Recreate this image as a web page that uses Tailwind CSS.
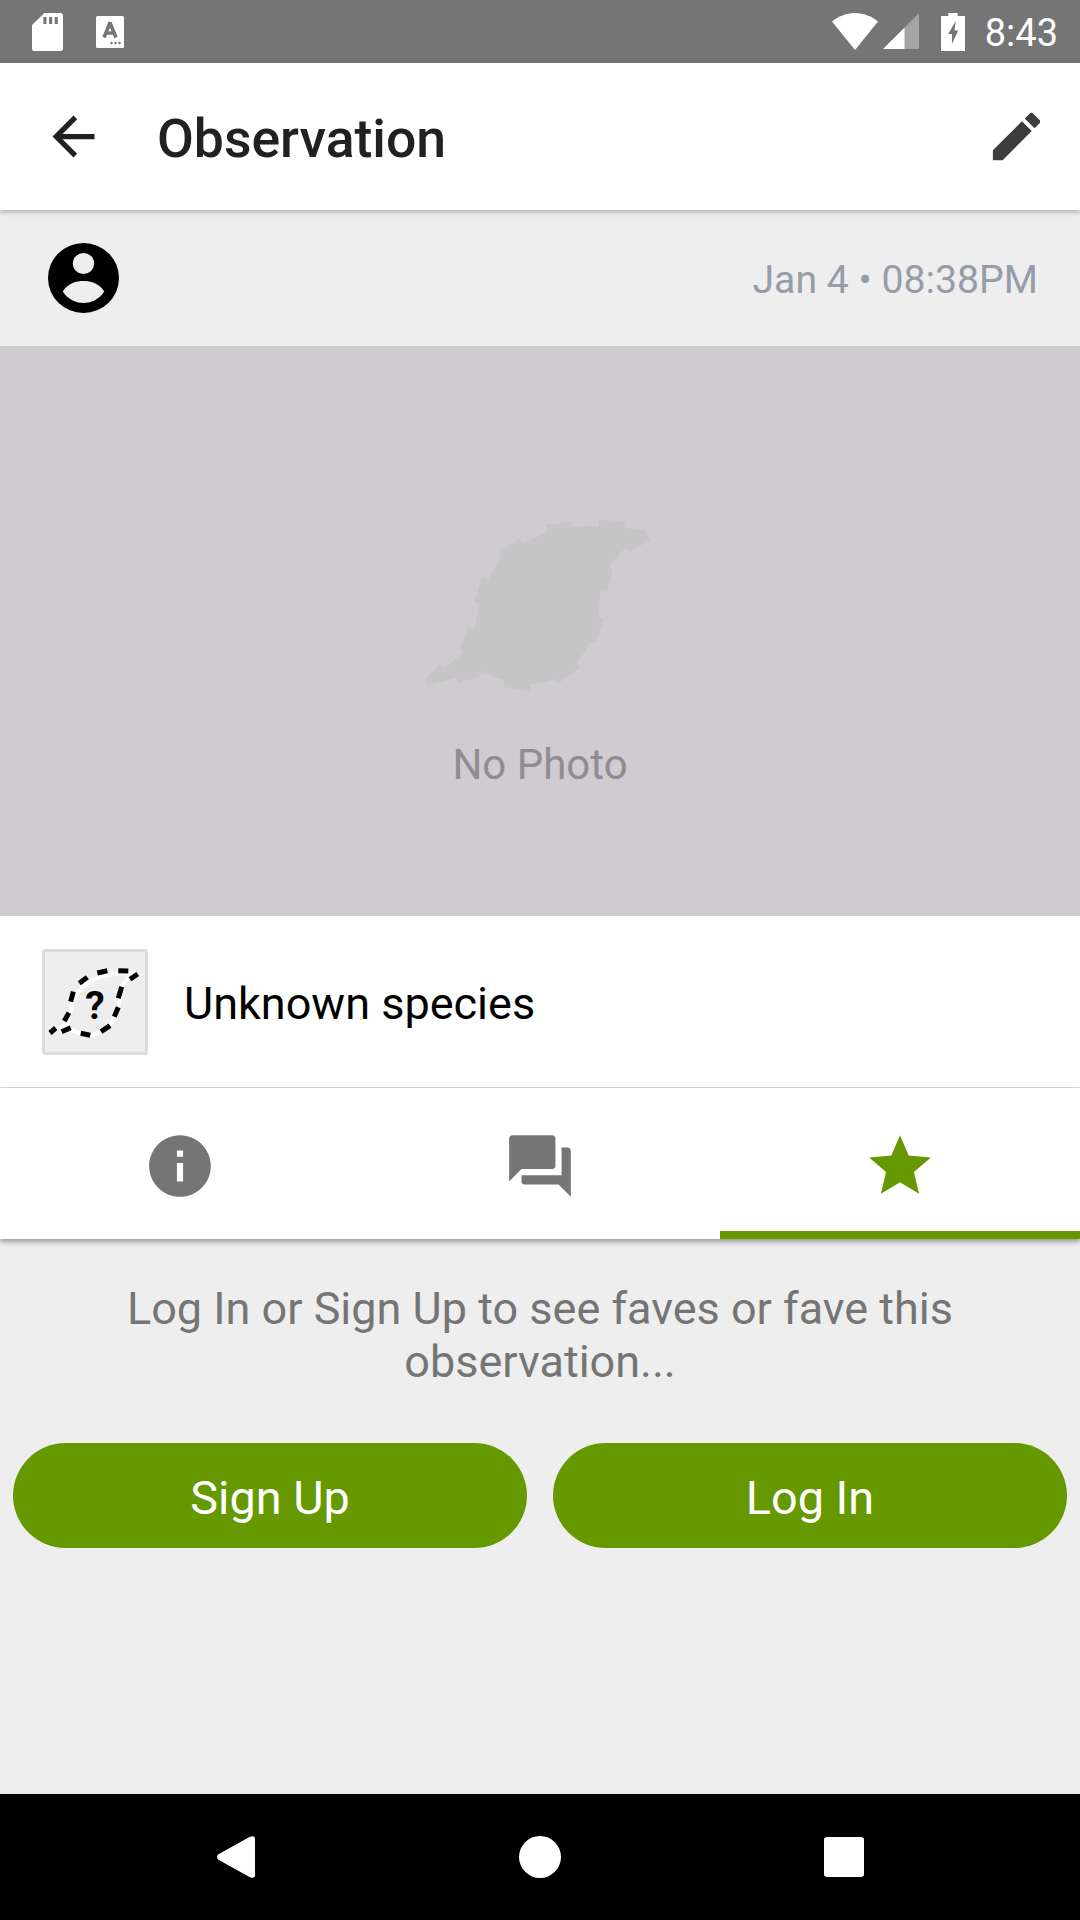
<!DOCTYPE html>
<html>
<head>
<meta charset="utf-8">
<script src="https://cdn.jsdelivr.net/npm/@tailwindcss/browser@4"></script>
</head>
<body class="m-0">
<div class="w-[1080px] h-[1920px] flex flex-col overflow-hidden bg-[#eeeeee] font-['Roboto',sans-serif]">

  <!-- status bar -->
  <div class="h-[63px] shrink-0 bg-[#757575] flex items-center text-white">
    <svg class="ml-[32px] w-[31px] h-[38px]" viewBox="0 0 30 38" preserveAspectRatio="none"><path fill="#fff" fill-rule="evenodd" d="M12 0H27.500Q30 0 30 2.500V35.500Q30 38 27.500 38H2.500Q0 38 0 35.500V12ZM11 4V11H14V4ZM16.500 4V11H19.500V4ZM22 4V11H25V4Z"/></svg>
    <svg class="ml-[33px] w-[28px] h-[32px]" viewBox="0 0 28 32"><path fill="#fff" d="M1.500 0H26.500Q28 0 28 1.500V30.500Q28 32 26.500 32H1.500Q0 32 0 30.500V1.500Q0 0 1.500 0Z"/><path fill="none" stroke="#757575" stroke-width="3.600" d="M8 21.500L13.700 7.500H14.300L20 21.500M10 17H18"/><circle cx="15.500" cy="27" r="1.200" fill="#757575"/><circle cx="19.500" cy="27" r="1.200" fill="#757575"/><circle cx="23.500" cy="27" r="1.200" fill="#757575"/></svg>
    <svg class="ml-auto w-[46px] h-[37px]" viewBox="0 0 45 37" preserveAspectRatio="none"><path fill="#fff" d="M0 8.500C6 3.500 14 0 22.500 0S39 3.500 45 8.500L22.500 37Z"/></svg>
    <svg class="ml-[5px] w-[36px] h-[37px]" viewBox="0 0 35 37" preserveAspectRatio="none"><path fill="#fff" fill-opacity=".35" d="M21 14.500L35 0V36H21Z"/><path fill="#fff" d="M0 36L21 14.500V36Z"/></svg>
    <svg class="ml-[22px] w-[24px] h-[38px]" viewBox="0 0 23 38" preserveAspectRatio="none"><path fill="#fff" d="M7 0H16V3H23V38H0V3H7Z"/><path fill="#757575" d="M14 8L7 21H10.500V31L16.500 17.500H13Z"/></svg>
    <span class="ml-[20px] mr-[22px] mt-[3px] text-[38px] leading-none">8:43</span>
  </div>

  <!-- toolbar -->
  <div class="relative z-20 h-[147px] shrink-0 bg-white flex items-center shadow-[0_2px_5px_rgba(0,0,0,0.28)]">
    <svg class="ml-[42px] w-[63px] h-[63px]" viewBox="0 0 24 24"><path fill="#212121" d="M20 11H7.830l5.590-5.590L12 4l-8 8 8 8 1.410-1.410L7.830 13H20v-2z"/></svg>
    <span class="ml-[52px] mt-[5px] text-[53.500px] font-medium text-[#212121] leading-none">Observation</span>
    <svg class="ml-auto mr-[32px] w-[63px] h-[63px]" viewBox="0 0 24 24"><path fill="#3d3d3d" d="M3 17.250V21h3.750L17.810 9.940l-3.750-3.750L3 17.250zM20.710 7.040c.39-.39.39-1.020 0-1.410l-2.340-2.340c-.39-.39-1.020-.39-1.410 0l-1.830 1.830 3.750 3.750 1.830-1.830z"/></svg>
  </div>

  <!-- user row -->
  <div class="h-[136px] shrink-0 bg-[#eeeeee] flex items-center justify-between pl-[48px] pr-[42px]">
    <svg class="w-[71px] h-[70px]" viewBox="0 0 70 70" preserveAspectRatio="none"><circle cx="35" cy="35" r="35" fill="#000"/><circle cx="35" cy="20.500" r="10.500" fill="#eeeeee"/><path fill="#eeeeee" d="M14.500 48.500C20 40 28 38 35 38S50 40 55.500 48.500C50 57 42 60 35 60S20 57 14.500 48.500Z"/></svg>
    <span class="mt-[6px] text-[39.200px] text-[#969ca8] leading-none">Jan 4 • 08:38PM</span>
  </div>

  <!-- photo -->
  <div class="h-[570px] shrink-0 bg-[#cfcbd1] flex flex-col items-center pt-[154px]">
    <svg class="w-[280px] h-[200px]" viewBox="0 0 840 600"><path fill="#c5c5c5" d="M75 535L120 495L132 505L190 458L180 448L205 383L222 390L240 312L224 305L245 232L265 238L305 172L297 158L360 115L370 128L442 97L437 75L515 64L518 82L597 78L597 60L673 64L675 84L735 90L750 122L685 155L678 143Q650 165 627 200L638 207L620 275L602 272L595 350L612 355L585 430L570 425Q555 460 528 487L540 503L475 550L462 537Q430 550 390 553L388 573L310 560L312 540Q275 530 243 512L240 527L175 550L168 533L92 553L85 562L73 540Z"/></svg>
    <span class="mt-[44px] text-[42px] text-[#8f8c92] leading-none">No Photo</span>
  </div>

  <!-- species -->
  <div class="h-[172px] shrink-0 bg-white flex items-center border-b border-[#d9d9d9] pl-[42px]">
    <svg class="w-[106px] h-[106px] rounded-[3px] bg-[#eeeeee] border-[3px] border-[#dcdcdc]" viewBox="3 3 100 100">
      <path fill="none" stroke="#fff" stroke-width="4" d="M16 80L26 74L31 52C38 34 56 24 90 24L80 37L76 60C72 76 60 86 44 86L26 80"/>
      <g stroke="#000" stroke-width="5" fill="none">
        <path d="M8 84L13.700 79"/><path d="M19.700 82.700L28.700 78.700"/><path d="M22.300 72L27 63.700"/><path d="M28.700 52.700L31.300 42.700"/><path d="M37.300 34.300L45.300 28.300"/><path d="M55.300 24L65.300 21.700"/><path d="M76.300 21.700L86.300 22"/><path d="M88 30.300L95.700 25"/><path d="M76.300 49.300L79.700 37.700"/><path d="M72.300 67.700L76.300 58.300"/><path d="M59 82.700L68 76.700"/><path d="M38.700 84.300L48.300 86.300"/>
      </g>
      <text x="53" y="69.500" text-anchor="middle" font-size="39" font-weight="700" fill="#000" font-family="Roboto">?</text>
    </svg>
    <span class="ml-[36px] mt-[3px] text-[45px] text-black leading-none">Unknown species</span>
  </div>

  <!-- tabs -->
  <div class="relative z-10 h-[151px] shrink-0 bg-white grid grid-cols-3 shadow-[0_3px_5px_rgba(0,0,0,0.35)]">
    <div class="flex items-start justify-center pt-[41px]">
      <svg class="w-[74px] h-[74px]" viewBox="0 0 24 24"><path fill="#757575" d="M12 2C6.480 2 2 6.480 2 12s4.480 10 10 10 10-4.480 10-10S17.520 2 12 2zm1 15h-2v-6h2v6zm0-8h-2V7h2v2z"/></svg>
    </div>
    <div class="flex items-start justify-center pt-[41px]">
      <svg class="w-[74px] h-[74px]" viewBox="0 0 24 24"><path fill="#757575" d="M21 6h-2v9H6v2c0 .55.45 1 1 1h11l4 4V7c0-.55-.45-1-1-1zm-4 6V3c0-.55-.45-1-1-1H3c-.55 0-1 .45-1 1v14l4-4h10c.55 0 1-.45 1-1z"/></svg>
    </div>
    <div class="flex items-start justify-center pt-[41px] border-b-[8px] border-[#669900]">
      <svg class="w-[74px] h-[74px]" viewBox="0 0 24 24"><path fill="#669900" d="M12 17.270L18.180 21l-1.640-7.030L22 9.240l-7.190-.61L12 2 9.190 8.630 2 9.240l5.460 4.730L5.820 21z"/></svg>
    </div>
  </div>

  <!-- content -->
  <div class="flex-1 bg-[#eeeeee] flex flex-col items-center pt-[43px]">
    <p class="w-[900px] text-center text-[45px] leading-[53px] text-[#757575]">Log In or Sign Up to see faves or fave this observation...</p>
    <div class="mt-[55px] w-full px-[13px] grid grid-cols-2 gap-[26px]">
      <div class="h-[105px] rounded-full bg-[#669900] flex items-center justify-center text-white text-[46.800px] pt-[5px]">Sign Up</div>
      <div class="h-[105px] rounded-full bg-[#669900] flex items-center justify-center text-white text-[46.800px] pt-[5px]">Log In</div>
    </div>
  </div>

  <!-- nav bar -->
  <div class="h-[126px] shrink-0 bg-black relative">
    <svg class="absolute left-[217px] top-[42px] w-[38px] h-[42px]" viewBox="0 0 38 42"><path fill="#fff" d="M1 18.500L33 .8Q38-1 38 3V39Q38 43 33 41.200L1 23.500Q-1 21 1 18.500Z"/></svg>
    <div class="absolute left-[519px] top-[42px] w-[42px] h-[42px] rounded-full bg-white"></div>
    <div class="absolute left-[824px] top-[43px] w-[40px] h-[40px] rounded-[3px] bg-white"></div>
  </div>
</div>
</body>
</html>
